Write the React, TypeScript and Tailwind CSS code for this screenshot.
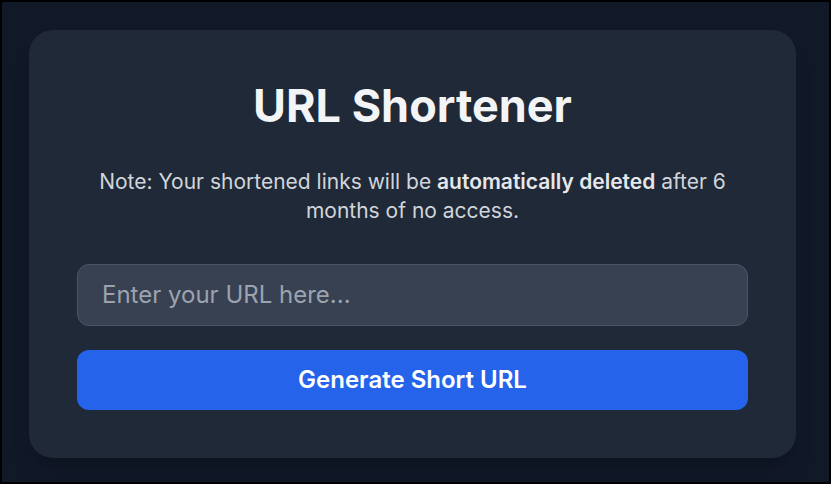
export default function App() {
  return (
    <div className="h-[484px] w-full border-2 border-black bg-[#111827] pl-[27px] pt-[28px] font-['Inter',sans-serif]">
      <div className="w-[767px] rounded-3xl bg-[#1f2937] p-12 shadow-xl">
        <h1 className="mb-[33px] text-center text-[45px] leading-[56px] font-bold text-[#f3f4f6]">
          URL Shortener
        </h1>
        <p className="mb-[39px] text-center text-[21px] leading-[29px] text-[#d1d5db]">
          Note: Your shortened links will be{' '}
          <span className="font-semibold text-[#e5e7eb]">automatically deleted</span> after 6
          months of no access.
        </p>
        <input
          type="text"
          placeholder="Enter your URL here..."
          className="block w-full rounded-xl border border-[#4b5563] bg-[#374151] px-6 py-3.5 text-2xl leading-8 text-[#f3f4f6] placeholder-[#9ca3af] outline-none"
        />
        <button className="mt-6 block w-full rounded-xl bg-[#2563eb] py-3.5 text-2xl leading-8 font-semibold text-white">
          Generate Short URL
        </button>
      </div>
    </div>
  );
}
